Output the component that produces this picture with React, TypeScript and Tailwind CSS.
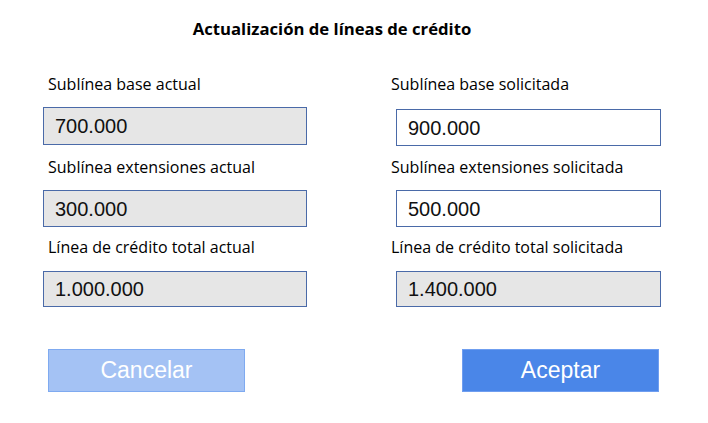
type FieldProps = {
  label: string;
  value: string;
  editable?: boolean;
  labelClass?: string;
  boxClass?: string;
};

function Field({ label, value, editable = false, labelClass = "", boxClass = "" }: FieldProps) {
  return (
    <div className="flex flex-col">
      <div className={`text-[16px] leading-[18px] text-black font-['Open_Sans',sans-serif] ${labelClass}`}>
        {label}
      </div>
      <div
        className={`flex items-center border border-[#4a6aa8] pl-[11px] text-[20px] text-[#111] font-['Liberation_Sans',Arial,sans-serif] ${
          editable ? "bg-white" : "bg-[#e6e6e6]"
        } ${boxClass}`}
      >
        {value}
      </div>
    </div>
  );
}

export default function App() {
  return (
    <div className="h-[423px] w-[708px] bg-white">
      <h1 className="w-[664px] pt-[20px] text-center text-[16.7px] font-bold leading-[18px] text-black font-['Open_Sans',sans-serif]">
        Actualización de líneas de crédito
      </h1>

      <div className="mt-[37px] flex">
        <div className="ml-[43px] flex w-[264px] flex-col">
          <Field label="Sublínea base actual" value="700.000" labelClass="pl-[5px]" boxClass="mt-[14px] h-[38px]" />
          <Field label="Sublínea extensiones actual" value="300.000" labelClass="pl-[5px] mt-[13px]" boxClass="mt-[14px] h-[37px]" />
          <Field label="Línea de crédito total actual" value="1.000.000" labelClass="pl-[5px] mt-[11px]" boxClass="mt-[15px] h-[36px]" />
        </div>

        <div className="ml-[84px] flex w-[270px] flex-col">
          <Field label="Sublínea base solicitada" value="900.000" editable boxClass="ml-[5px] mt-[16px] h-[37px]" />
          <Field label="Sublínea extensiones solicitada" value="500.000" editable labelClass="mt-[12px]" boxClass="ml-[5px] mt-[14px] h-[37px]" />
          <Field label="Línea de crédito total solicitada" value="1.400.000" labelClass="mt-[11px]" boxClass="ml-[5px] mt-[15px] h-[36px]" />
        </div>
      </div>

      <div className="mt-[42px] flex">
        <button
          type="button"
          className="ml-[48px] h-[43px] w-[197px] border border-[#7faaf0] bg-[#a4c2f4] text-[23px] text-white font-['Liberation_Sans',Arial,sans-serif]"
        >
          Cancelar
        </button>
        <button
          type="button"
          className="ml-[217px] h-[43px] w-[197px] border border-[#6f9ef0] bg-[#4a86e8] text-[23px] text-white font-['Liberation_Sans',Arial,sans-serif]"
        >
          Aceptar
        </button>
      </div>
    </div>
  );
}
